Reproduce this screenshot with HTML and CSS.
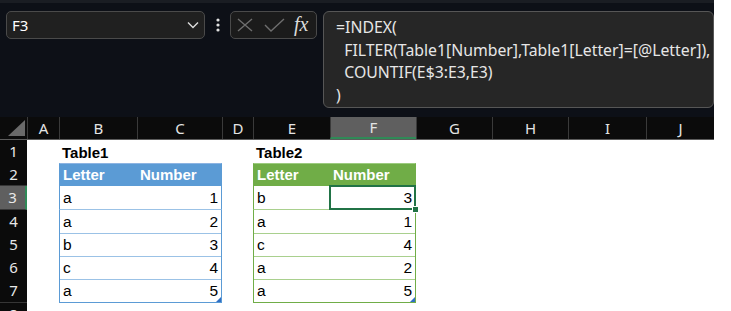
FILE: index.html
```html
<!DOCTYPE html>
<html>

<head>
    <meta charset="utf-8">
    <title>Table2</title>
    <link rel="stylesheet" href="styles.css">
</head>

<body>
    <div class="app">
        <div class="toolbar">
            <div class="name-box">
                <span>F3</span>
                <svg width="12" height="8" viewBox="0 0 12 8"><polyline points="1,1.5 6,6.5 11,1.5" fill="none" stroke="#dcdcdc" stroke-width="1.4"/></svg>
            </div>
            <div class="dots">
                <svg width="4" height="14" viewBox="0 0 4 14"><circle cx="2" cy="2" r="1.6" fill="#e0e0e0"/><circle cx="2" cy="7" r="1.6" fill="#e0e0e0"/><circle cx="2" cy="12" r="1.6" fill="#e0e0e0"/></svg>
            </div>
            <div class="formula-buttons">
                <svg class="btn-cancel" width="16" height="14" viewBox="0 0 16 14"><path d="M1 1 L15 13 M15 1 L1 13" stroke="#6e6e6e" stroke-width="1.4" fill="none"/></svg>
                <svg class="btn-enter" width="21" height="14" viewBox="0 0 21 14"><polyline points="1,7 7,13 20,1" stroke="#6e6e6e" stroke-width="1.4" fill="none"/></svg>
                <span class="fx">fx</span>
            </div>
            <div class="formula">=INDEX(
  FILTER(Table1[Number],Table1[Letter]=[@Letter]),
  COUNTIF(E$3:E3,E3)
)</div>
        </div>

        <div class="sheet">
            <div class="row col-head">
                <div class="corner"><div class="corner-mark"></div></div>
                <div class="ch">A</div>
                <div class="ch">B</div>
                <div class="ch">C</div>
                <div class="ch">D</div>
                <div class="ch">E</div>
                <div class="ch selected">F</div>
                <div class="ch">G</div>
                <div class="ch">H</div>
                <div class="ch">I</div>
                <div class="ch">J</div>
            </div>

            <div class="row">
                <div class="rh">1</div>
                <div class="cell col-b title">Table1</div>
                <div class="cell col-e title">Table2</div>
            </div>

            <div class="row">
                <div class="rh">2</div>
                <div class="cell col-b t1 th first">Letter</div>
                <div class="cell col-c t1 th last">Number</div>
                <div class="cell col-e t2 th first">Letter</div>
                <div class="cell col-f t2 th last">Number</div>
            </div>

            <div class="row tall">
                <div class="rh selected">3</div>
                <div class="cell col-b t1 first">a</div>
                <div class="cell col-c t1 last num">1</div>
                <div class="cell col-e t2 first">b</div>
                <div class="cell col-f t2 last num active">3</div>
            </div>

            <div class="row">
                <div class="rh">4</div>
                <div class="cell col-b t1 first">a</div>
                <div class="cell col-c t1 last num">2</div>
                <div class="cell col-e t2 first">a</div>
                <div class="cell col-f t2 last num">1</div>
            </div>

            <div class="row">
                <div class="rh">5</div>
                <div class="cell col-b t1 first">b</div>
                <div class="cell col-c t1 last num">3</div>
                <div class="cell col-e t2 first">c</div>
                <div class="cell col-f t2 last num">4</div>
            </div>

            <div class="row">
                <div class="rh">6</div>
                <div class="cell col-b t1 first">c</div>
                <div class="cell col-c t1 last num">4</div>
                <div class="cell col-e t2 first">a</div>
                <div class="cell col-f t2 last num">2</div>
            </div>

            <div class="row tall">
                <div class="rh">7</div>
                <div class="cell col-b t1 first bottom">a</div>
                <div class="cell col-c t1 last num bottom corner-handle">5</div>
                <div class="cell col-e t2 first bottom">a</div>
                <div class="cell col-f t2 last num bottom corner-handle">5</div>
            </div>

            <div class="row">
                <div class="rh">8</div>
            </div>
        </div>
    </div>
</body>

</html>
```

FILE: styles.css
```css
body {
    margin: 0;
    background-color: #fff;
    font-family: "Noto Sans", sans-serif;
}

.app {
    width: 714px;
    overflow: hidden;
}

/* Formula bar */

.toolbar {
    height: 117px;
    box-sizing: border-box;
    background-color: #0d1017;
    border-top: 3px solid #1a1d23;
    padding: 8px 0 0 6px;
    display: flex;
    align-items: flex-start;
}

.name-box {
    width: 199px;
    height: 28px;
    box-sizing: border-box;
    border: 1px solid #4a4a4a;
    border-radius: 5px;
    background-color: #202020;
    display: flex;
    align-items: center;
    justify-content: space-between;
    padding: 0 5px 0 5px;
    color: #fff;
    font-size: 15px;
}

.dots {
    width: 25px;
    height: 28px;
    display: flex;
    align-items: center;
    justify-content: center;
}

.formula-buttons {
    width: 87px;
    height: 28px;
    box-sizing: border-box;
    border: 1px solid #4a4a4a;
    border-radius: 5px;
    background-color: #1b1b1b;
    display: flex;
    align-items: center;
    padding-left: 6px;
}

.btn-enter {
    margin-left: 11px;
}

.fx {
    margin-left: 9px;
    font-family: "Liberation Serif", serif;
    font-style: italic;
    font-size: 20px;
    color: #dcdcdc;
    line-height: 1;
    margin-top: -3px;
}

.formula {
    flex: 1;
    margin-left: 6px;
    height: 97px;
    box-sizing: border-box;
    border: 1px solid #565656;
    border-radius: 6px;
    background-color: #262626;
    padding: 4px 0 0 12px;
    color: #e6e6e6;
    font-size: 15.8px;
    line-height: 22.7px;
    white-space: pre;
    overflow: hidden;
}

/* Sheet */

.row {
    display: grid;
    grid-template-columns: 27px 32px 78px 85px 31px 77px 86px 76px 76px 78px 68px;
    height: 23px;
}

.row.tall {
    height: 24px;
}

.col-head {
    background-color: #0b0b0b;
    border-bottom: 1px solid #5c5c5c;
    box-sizing: border-box;
}

.corner {
    display: flex;
    align-items: flex-end;
    justify-content: flex-end;
    padding: 0 2px 3px 0;
}

.corner-mark {
    width: 17px;
    height: 16px;
    background-color: #6a6a6a;
    clip-path: polygon(100% 0, 100% 100%, 0 100%);
}

.ch {
    border-left: 1px solid #3a3a3a;
    color: #e4e4e4;
    font-size: 15px;
    text-align: center;
    line-height: 22px;
}

.ch.selected {
    background-color: #5f5f5f;
    border-bottom: 2px solid #2f8a57;
    line-height: 20px;
}

.rh {
    grid-column: 1;
    background-color: #0b0b0b;
    border-bottom: 1px solid #363636;
    box-sizing: border-box;
    color: #e8e8e8;
    font-size: 15px;
    text-align: center;
    line-height: 22px;
}

.rh.selected {
    background-color: #5f5f5f;
    border-right: 2px solid #2f8a57;
}

.cell {
    box-sizing: border-box;
    font-family: "Liberation Sans", sans-serif;
    font-size: 15.5px;
    color: #000;
    padding: 1px 3px 0;
    line-height: 22px;
    white-space: nowrap;
    position: relative;
}

.col-b { grid-column: 3; }
.col-c { grid-column: 4; }
.col-e { grid-column: 6; }
.col-f { grid-column: 7; }

.title {
    font-weight: bold;
    font-size: 15px;
    line-height: 24px;
}

.num {
    text-align: right;
}

/* Table1 - blue */

.t1 {
    border-bottom: 1px solid #9bc2e6;
}

.t1.first {
    border-left: 1px solid #5b9bd5;
}

.t1.last {
    border-right: 1px solid #5b9bd5;
}

.t1.th {
    background-color: #5b9bd5;
    border-top: 1px solid #8db4e2;
    border-bottom: none;
}

.t1.bottom {
    border-bottom: 1px solid #5b9bd5;
}

/* Table2 - green */

.t2 {
    border-bottom: 1px solid #a9d08e;
}

.t2.first {
    border-left: 1px solid #70ad47;
}

.t2.last {
    border-right: 1px solid #70ad47;
}

.t2.th {
    background-color: #70ad47;
    border-top: 1px solid #9ccb7f;
    border-bottom: none;
}

.t2.bottom {
    border-bottom: 1px solid #70ad47;
}

.th {
    color: #fff;
    font-weight: bold;
    font-size: 15px;
    padding-top: 0;
}

/* Active cell */

.active::after {
    content: "";
    position: absolute;
    left: -1px;
    top: -1px;
    right: -1px;
    bottom: -1px;
    border: 2px solid #217346;
}

.active::before {
    content: "";
    position: absolute;
    right: -4px;
    bottom: -4px;
    width: 5px;
    height: 5px;
    background-color: #217346;
    border: 1px solid #fff;
    z-index: 2;
}

/* Table resize handle */

.corner-handle::after {
    content: "";
    position: absolute;
    right: 0;
    bottom: 0;
    border-style: solid;
    border-width: 0 0 5px 5px;
    border-color: transparent transparent #2f6fc4 transparent;
}
```
